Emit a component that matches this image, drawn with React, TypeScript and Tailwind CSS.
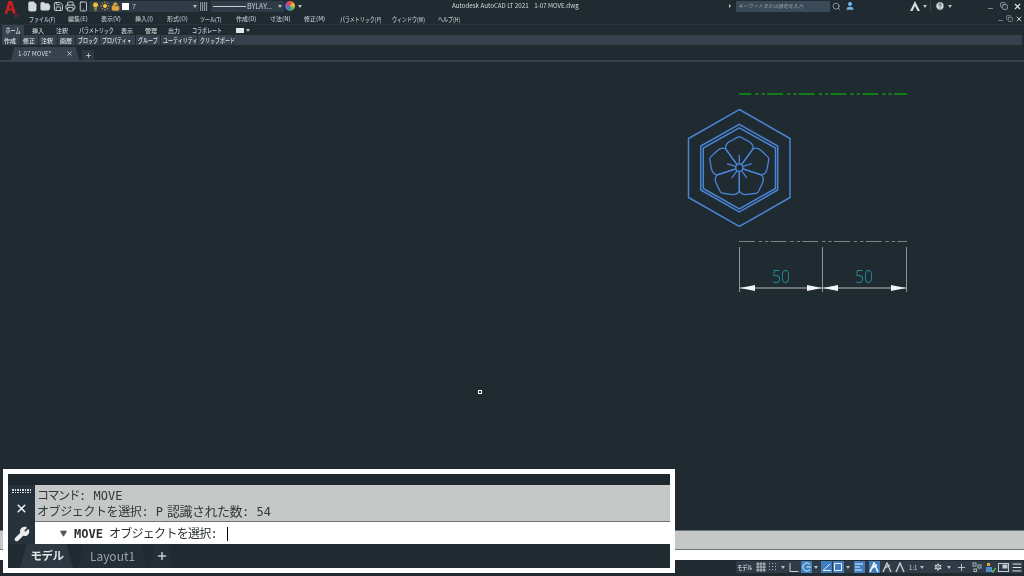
import React from 'react';
import { File, FolderOpen, Save, Printer, Smartphone, Lightbulb, Sun, LockOpen, Search, User, X, Plus, Settings, Menu, Wrench, CircleHelp, Minus, Copy, Triangle } from 'lucide-react';

const kana = 'text-[5px] scale-y-125 font-medium';
const kanji = 'text-[6px] font-medium';

const menus: [string, string][] = [
  ['ファイル(F)', `w-[39px] ${kana}`], ['編集(E)', `w-[33px] ${kanji}`], ['表示(V)', `w-[34px] ${kanji}`], ['挿入(I)', `w-[32px] ${kanji}`],
  ['形式(O)', `w-[33px] ${kanji}`], ['ツール(T)', `w-[36px] ${kana}`], ['作成(D)', `w-[34px] ${kanji}`], ['寸法(N)', `w-[34px] ${kanji}`],
  ['修正(M)', `w-[36px] ${kanji}`], ['パラメトリック(P)', `w-[52px] ${kana}`], ['ウィンドウ(W)', `w-[46px] ${kana}`], ['ヘルプ(H)', `w-[40px] ${kana}`],
];
const ribbonTabs: [string, string][] = [
  ['挿入', `w-[24px] ${kanji}`], ['注釈', `w-[23px] ${kanji}`], ['パラメトリック', `w-[42px] ${kana}`], ['表示', `w-[24px] ${kanji}`],
  ['管理', `w-[23px] ${kanji}`], ['出力', `w-[24px] ${kanji}`], ['コラボレート', `w-[43px] ${kana}`],
];
const panels: [string, string][] = [
  ['作成', `w-[16px] ${kanji}`], ['修正', `w-[15px] ${kanji}`], ['注釈', `w-[16px] ${kanji}`], ['画層', `w-[15px] ${kanji}`],
  ['ブロック', `w-[21px] ${kana}`], ['プロパティ ▾', `w-[33px] ${kana}`], ['グループ', `w-[22px] ${kana}`],
  ['ユーティリティ', `w-[34px] ${kana}`], ['クリップボード', `w-[33px] ${kana}`],
];

const Caret = () => <span className="block w-0 h-0 border-x-[2px] border-x-transparent border-t-[3px] border-t-[#b8c0c6]" />;

const Petals = () => (
  <g transform="translate(739.3 167.7)" fill="none" stroke="#4a84d4" strokeWidth="1.3">
    {[0, 72, 144, 216, 288].map((a) => (
      <g key={a} transform={`rotate(${a})`}>
        <path d="M-2.1 -2.9L-13.8 -19C-14 -22.5 -12 -25 -9 -26.5L-1.5 -30.5Q0 -31.2 1.5 -30.5L9 -26.5C12 -25 14 -22.5 13.8 -19L2.1 -2.9" />
        <path d="M0 -4V-13" />
      </g>
    ))}
    <circle r="3.6" strokeWidth="1.5" />
  </g>
);

const Drawing = () => (
  <svg className="absolute left-[680px] top-[23px]" width="240" height="220" viewBox="680 85 240 220">
    <path d="M739 94H907" stroke="#0d9a10" strokeWidth="1.3" strokeDasharray="15.7 4 3.3 3 3.3 2.4" strokeDashoffset="3.4" />
    <g fill="none" stroke="#4a84d4" strokeWidth="1.5">
      <path d="M739.3 109.5L790 138.5V197.5L739.3 226.5L688.5 197.5V138.5Z" />
      <path d="M739.3 124.3L777.7 146V190L739.3 212L700.8 190V146Z" />
      <path d="M739.3 127.8L775.5 148V188.5L739.3 209L703.3 188.5V148Z" />
    </g>
    <Petals />
    <path d="M739 241.5H907" stroke="#7a8488" strokeWidth="1" strokeDasharray="15.7 4 3.3 3 3.3 2.4" />
    <g stroke="#8d959a" strokeWidth="1">
      <path d="M739.5 247V292M822.5 247V292M906.5 247V292" />
      <path d="M739.5 288H906.5" stroke="#b9bec1" />
    </g>
    <g fill="#f2f4f4">
      <path d="M740 288L755 285V291Z" />
      <path d="M822 288L807 285V291Z" />
      <path d="M823 288L838 285V291Z" />
      <path d="M906 288L891 285V291Z" />
    </g>
    <g fill="#1f8f96" fontSize="19" fontFamily="'Noto Sans', sans-serif" fontWeight="300" textAnchor="middle">
      <text x="781" y="283" textLength="18" lengthAdjust="spacingAndGlyphs">50</text>
      <text x="864" y="283" textLength="18" lengthAdjust="spacingAndGlyphs">50</text>
    </g>
  </svg>
);

const StatusIcon = ({ active, w = 'w-[12px]', children }: { active?: boolean; w?: string; children: React.ReactNode }) => (
  <span className={`${w} h-[12px] flex items-center justify-center ${active ? 'bg-[#3f7fc0]' : ''}`}>{children}</span>
);

const StatusBar = () => (
  <div className="h-[16px] bg-[#1f2a31] flex justify-end items-start pt-[1px] pr-[1px]">
    <div className="flex items-center h-[12px] w-[287px] bg-[#2f3c47] pl-[1px] gap-[1px] text-[#c5ccd1]">
      <span className="w-[17px] text-[5px] font-bold text-center whitespace-nowrap scale-y-125">モデル</span>
      <StatusIcon w="w-[12px] ml-[2px]">
        <svg width="10" height="10" viewBox="0 0 10 10" stroke="#c5ccd1" strokeWidth="0.9"><path d="M2 0V10M5 0V10M8 0V10M0 2H10M0 5H10M0 8H10" /></svg>
      </StatusIcon>
      <StatusIcon>
        <svg width="10" height="10" viewBox="0 0 10 10" fill="#aab2b8"><path d="M1 1h1v1H1zM4 1h1v1H4zM7 1h1v1H7zM1 4h1v1H1zM4 4h1v1H4zM7 4h1v1H7zM1 7h1v1H1zM4 7h1v1H4zM7 7h1v1H7z" /></svg>
      </StatusIcon>
      <StatusIcon w="w-[8px]"><Caret /></StatusIcon>
      <StatusIcon w="w-[14px]">
        <svg width="11" height="11" viewBox="0 0 11 11" fill="none" stroke="#c5ccd1"><path d="M2 1V9.5H10.5" /></svg>
      </StatusIcon>
      <StatusIcon active>
        <svg width="10" height="10" viewBox="0 0 10 10" fill="none" stroke="#e6eef5"><path d="M9 2.5A4 4 0 1 0 9 7.5M5.5 5H10" /></svg>
      </StatusIcon>
      <StatusIcon w="w-[8px]"><Caret /></StatusIcon>
      <StatusIcon active>
        <svg width="10" height="10" viewBox="0 0 10 10" fill="none" stroke="#e6eef5"><path d="M1 8.5H9M1 8.5L8 2" /></svg>
      </StatusIcon>
      <StatusIcon active>
        <svg width="10" height="10" viewBox="0 0 10 10" fill="none" stroke="#e6eef5"><path d="M1.5 1.5H8.5V8.5H1.5Z" /></svg>
      </StatusIcon>
      <StatusIcon w="w-[8px]"><Caret /></StatusIcon>
      <StatusIcon active w="w-[12px] ml-[1px]">
        <svg width="10" height="10" viewBox="0 0 10 10" stroke="#e6eef5" strokeWidth="1.2"><path d="M1 2H9M1 5H6M1 8H8" /></svg>
      </StatusIcon>
      <StatusIcon active w="w-[12px] ml-[3px]">
        <svg width="10" height="11" viewBox="0 0 10 11" fill="none" stroke="#f2f6fa" strokeWidth="1.6"><path d="M1 10L5 1L9 10M3 6L8 3" /></svg>
      </StatusIcon>
      <StatusIcon w="w-[14px]">
        <svg width="10" height="11" viewBox="0 0 10 11" fill="none" stroke="#c5ccd1" strokeWidth="1.4"><path d="M1 10L5 1L9 10M3 6L8 3" /></svg>
      </StatusIcon>
      <StatusIcon>
        <svg width="10" height="11" viewBox="0 0 10 11" fill="none" stroke="#c5ccd1" strokeWidth="1.4"><path d="M1 10L5 1L9 10" /></svg>
      </StatusIcon>
      <span className="w-[11px] text-[6px] text-center ml-[2px]">1:1</span>
      <StatusIcon w="w-[6px]"><Caret /></StatusIcon>
      <StatusIcon w="w-[14px] ml-[6px]"><Settings size={10} fill="#d5dade" stroke="#2f3c47" /></StatusIcon>
      <StatusIcon w="w-[8px]"><Caret /></StatusIcon>
      <StatusIcon w="w-[14px] ml-[2px]"><Plus size={11} stroke="#c5ccd1" /></StatusIcon>
      <StatusIcon w="w-[14px] ml-[1px]">
        <svg width="10" height="10" viewBox="0 0 10 10" fill="none" stroke="#b7bfc5" strokeWidth="0.9"><rect x="1" y="1" width="3" height="3" /><rect x="6" y="3" width="3" height="3" /><rect x="2" y="7" width="2.5" height="2.5" /></svg>
      </StatusIcon>
      <StatusIcon w="w-[14px]">
        <svg width="11" height="11" viewBox="0 0 11 11"><rect x="2" y="1" width="3" height="3" fill="#e2a93b" /><rect x="1" y="5" width="6" height="5" fill="#4f86d0" /><path d="M6 8L8 10L10.5 6" fill="none" stroke="#6cc04a" strokeWidth="1.3" /></svg>
      </StatusIcon>
      <StatusIcon w="w-[14px]">
        <svg width="11" height="9" viewBox="0 0 11 9" fill="none" stroke="#c5ccd1"><rect x="0.5" y="0.5" width="10" height="8" /><rect x="5" y="2" width="4" height="3" fill="#c5ccd1" /></svg>
      </StatusIcon>
      <Menu size={13} stroke="#e2e6e9" />
    </div>
  </div>
);

const CommandBox = () => (
  <div className="absolute left-[3px] top-[469px] w-[672px] h-[104px] border-[5px] border-white bg-[#1f2a31] flex flex-col font-['DejaVu_Sans_Mono','Noto_Sans_CJK_JP',monospace]">
    <div className="h-[11px] bg-[#1d272e]" />
    <div className="flex h-[59px]">
      <div className="w-[27px] bg-[#26323b] flex flex-col items-center">
        <div className="grid grid-cols-8 gap-[1px] mt-[4px]">
          {Array.from({ length: 16 }).map((_, i) => (
            <span key={i} className="w-[1.5px] h-[1.5px] bg-[#d5dade]" />
          ))}
        </div>
        <X size={13} strokeWidth={3} className="text-[#e8ecee] mt-[9px]" />
        <Wrench size={16} fill="#e8ecee" className="text-[#e8ecee] mt-[11px]" />
      </div>
      <div className="flex-1 flex flex-col">
        <div className="h-[37px] bg-[#c4c8c6] text-[#33383b] text-[12px] leading-[16px] pt-[3px] pl-[2px] border-b border-[#6d7478] whitespace-pre">
          <div><span className="tracking-[-1.5px]">コマンド</span>: MOVE</div>
          <div>
            <span className="tracking-[-0.4px]">オブジェクトを選択</span>: P<span className="ml-[4px] text-[13px] tracking-[-0.5px]">認識された数</span>: 54
          </div>
        </div>
        <div className="flex-1 bg-white text-[#2c3033] text-[12px] flex items-center pl-[25px] pt-[1px] whitespace-pre">
          <Triangle size={7} fill="#555" stroke="#555" className="rotate-180" />
          <span className="font-bold ml-[7px]">MOVE</span>
          <span className="ml-[6px]"><span className="tracking-[-0.7px]">オブジェクトを選択</span>:</span>
          <span className="w-[1px] h-[14px] bg-black ml-[9px]" />
        </div>
      </div>
    </div>
    <div className="flex-1 flex items-stretch pl-[12px] font-['Noto_Sans_CJK_JP',sans-serif]">
      <span className="w-[53px] bg-[#2c3842] text-[#dfe4e7] text-[11.5px] tracking-[-0.5px] font-bold flex items-center justify-center pl-[1px] [clip-path:polygon(12%_0,88%_0,100%_100%,0_100%)]">モデル</span>
      <span className="w-[69px] ml-[5px] bg-[#232f37] text-[#98a2a9] text-[12px] flex items-center justify-center [clip-path:polygon(8%_0,92%_0,100%_100%,0_100%)]">Layout1</span>
      <span className="w-[23px] ml-[3px] bg-[#232f37] text-[#c5ccd1] flex items-center justify-center [clip-path:polygon(20%_0,80%_0,100%_100%,0_100%)]">
        <Plus size={12} strokeWidth={3} />
      </span>
    </div>
  </div>
);

export default function App() {
  return (
    <div className="relative w-[1024px] h-[576px] overflow-hidden bg-[#1f2a31] flex flex-col text-[#bcc4ca] font-['Noto_Sans_CJK_JP','Noto_Sans',sans-serif] blur-[0.3px]">
      {/* title bar */}
      <div className="h-[13px] pb-[1px] flex items-center">
        <div className="w-[27px] flex pl-[4px]">
          <svg className="mt-[6px]" width="15" height="17" viewBox="0 0 15 17">
            <path d="M4.5 0H8L12 12.5H9L8.2 9.5H4.6L3 13H0.5ZM5.5 7.5H7.7L6.6 3.5Z" fill="#c8201e" />
            <text x="10.5" y="15.5" fontSize="4" fill="#c8201e" fontWeight="700">LT</text>
          </svg>
        </div>
        <div className="flex items-center gap-[2px] w-[62px]">
          <File size={11} fill="#d5dade" stroke="#d5dade" />
          <FolderOpen size={11} fill="#d5dade" stroke="#d5dade" />
          <Save size={11} stroke="#d5dade" />
          <Printer size={11} stroke="#d5dade" />
          <Smartphone size={11} stroke="#d5dade" />
        </div>
        <div className="w-[110px] h-[11px] bg-[#2f3c47] flex items-center px-[2px]">
          <Lightbulb size={9} fill="#f2c23a" stroke="#f2c23a" />
          <Sun size={10} fill="#f2c23a" stroke="#f2c23a" />
          <LockOpen size={9} fill="#e2a93b" stroke="#e2a93b" className="ml-[1px]" />
          <span className="w-[7px] h-[7px] bg-white ml-[2px]" />
          <span className="text-[7px] ml-[3px]">7</span>
          <span className="ml-auto"><Caret /></span>
        </div>
        <div className="ml-[1px] w-[8px] h-[9px] bg-[repeating-linear-gradient(90deg,#8b949a_0_1px,#2f3c47_1px_2px)]" />
        <div className="ml-[3px] w-[73px] h-[11px] bg-[#2f3c47] flex items-center pl-[2px] pr-[2px]">
          <span className="w-[33px] h-[1px] bg-[#c5ccd1]" />
          <span className="text-[7px] ml-[1px] text-[#c5ccd1]">BYLAY...</span>
          <span className="ml-auto"><Caret /></span>
        </div>
        <span className="ml-[1px] w-[10px] h-[10px] rounded-full bg-[conic-gradient(#e2483b,#f2c23a,#4fb04a,#3f7fc0,#a04fc0,#e2483b)]" />
        <span className="ml-[3px]"><Caret /></span>
        <span className="ml-[150px] w-[130px] text-[6.2px] text-[#d5dade] whitespace-pre">Autodesk AutoCAD LT 2021    1-07 MOVE.dwg</span>
        <span className="ml-[147px] w-0 h-0 border-y-[2px] border-y-transparent border-l-[2px] border-l-[#c5ccd1]" />
        <div className="ml-[5px] w-[94px] h-[11px] bg-[#3b4a58] text-[5px] italic text-[#98a2a9] flex items-center pl-[2px]">キーワードまたは語句を入力</div>
        <Search size={9} className="ml-[2px]" stroke="#aab2b8" />
        <User size={10} fill="#6fb6ea" stroke="#6fb6ea" className="ml-[4px]" />
        <svg className="ml-[55px]" width="10" height="10" viewBox="0 0 10 10" fill="#d5dade"><path d="M5 0L10 10H7.5L5 5L2.5 10H0Z" /></svg>
        <span className="ml-[3px]"><Caret /></span>
        <span className="ml-[3px] w-[1px] h-[10px] bg-[#36434f]" />
        <CircleHelp size={10} fill="#d5dade" stroke="#1f2a31" className="ml-[4px]" />
        <span className="ml-[3px]"><Caret /></span>
        <Minus size={7} className="ml-[35px] mt-[4px]" stroke="#c5ccd1" />
        <Copy size={8} className="ml-[6px]" stroke="#c5ccd1" />
        <X size={9} className="ml-[5px]" strokeWidth={3} stroke="#e2e6e9" />
      </div>
      {/* menu bar */}
      <div className="h-[11px] flex items-center pl-[29px] text-[#bcc4ca]">
        {menus.map(([m, c]) => (
          <span key={m} className={`whitespace-nowrap ${c}`}>{m}</span>
        ))}
        <span className="ml-auto flex items-center gap-[2px] pr-[1px]">
          <Minus size={7} className="mt-[4px]" stroke="#aab2b8" />
          <Copy size={7} stroke="#aab2b8" />
          <X size={8} strokeWidth={3} stroke="#c5ccd1" />
        </span>
      </div>
      {/* ribbon tabs */}
      <div className="h-[11px] flex items-center border-t border-[#28343d] pl-[2px] text-[#d0d6da]">
        <span className="w-[22px] h-[10px] bg-[#36434f] flex items-center justify-center mr-[8px] text-[#e2e6e9]">
          <span className={kana}>ホーム</span>
        </span>
        {ribbonTabs.map(([t, c]) => (
          <span key={t} className={`whitespace-nowrap ${c}`}>{t}</span>
        ))}
        <span className="ml-[1px] w-[8px] h-[5px] bg-[#e2e6e9] mr-[2px]" />
        <Caret />
      </div>
      {/* ribbon panels */}
      <div className="h-[10px] flex items-center bg-[#35424e] ml-[2px] mr-[2px] text-[#dde2e5]">
        {panels.map(([p, c]) => (
          <span key={p} className="h-full flex items-center pl-[2px] border-r border-[#1f2a31]">
            <span className={`whitespace-nowrap block ${c}`}>{p}</span>
          </span>
        ))}
      </div>
      {/* file tabs */}
      <div className="h-[15px] flex items-end pl-[11px] border-b-2 border-[#36434f] box-content">
        <div className="w-[68px] h-[13px] bg-[#36434f] flex items-center pl-[7px] text-[6.2px] text-[#d5dade] [clip-path:polygon(5%_0,95%_0,100%_100%,0_100%)]">
          1-07 MOVE*
          <X size={7} strokeWidth={3} className="ml-auto mr-[6px]" />
        </div>
        <div className="w-[12px] h-[10px] ml-[3px] bg-[#2c3842] flex items-center justify-center">
          <Plus size={7} strokeWidth={3} />
        </div>
      </div>
      {/* model space */}
      <div className="relative flex-1">
        <Drawing />
        <span className="absolute left-[478px] top-[328px] w-[4px] h-[4px] border border-white" />
      </div>
      {/* command line behind the highlight box */}
      <div className="h-[19px] bg-[#c4c8c6] border-t border-[#6d7478]" />
      <div className="h-[11px] bg-white border-t border-[#6d7478]" />
      <StatusBar />
      <CommandBox />
    </div>
  );
}
